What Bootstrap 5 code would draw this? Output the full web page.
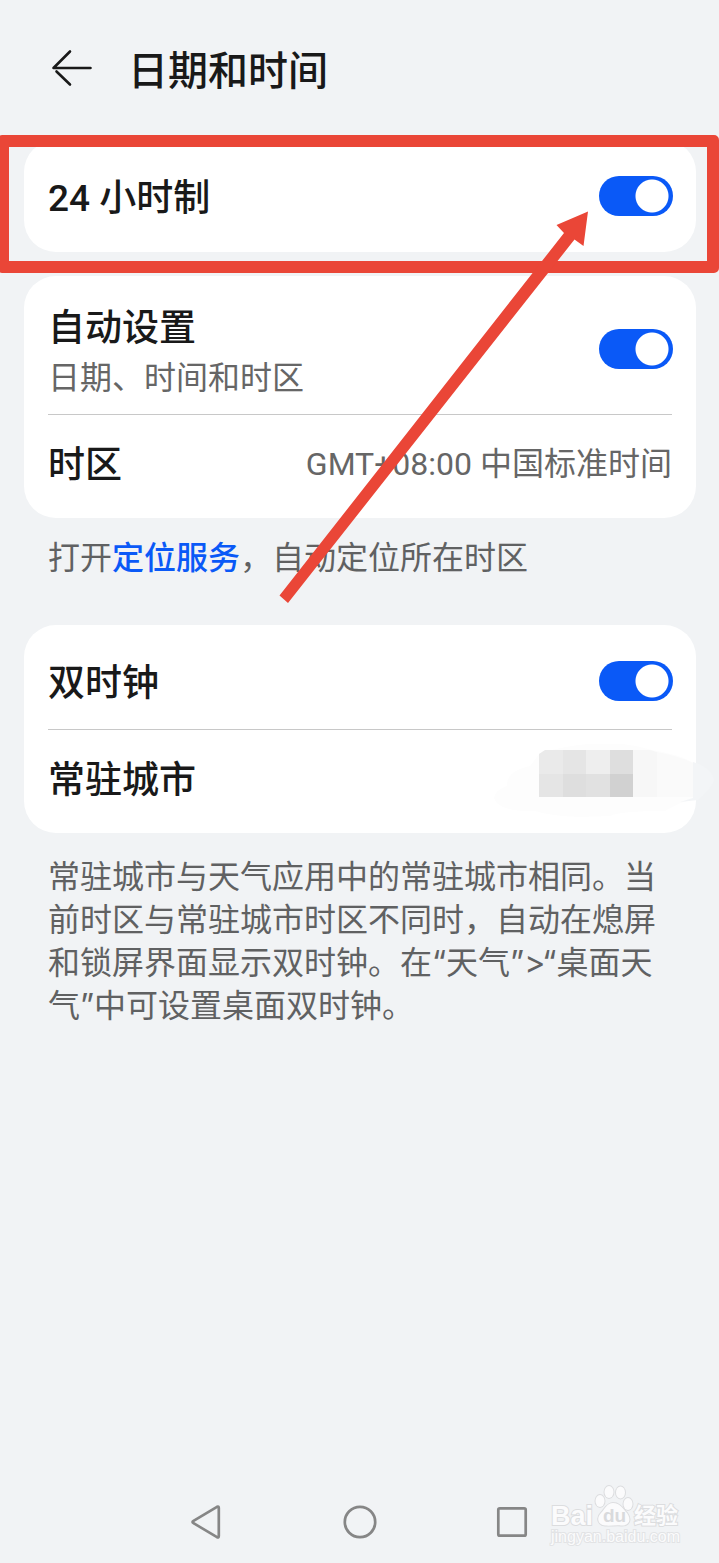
<!DOCTYPE html>
<html lang="zh-CN">
<head>
<meta charset="utf-8">
<meta name="viewport" content="width=device-width, initial-scale=1">
<title>日期和时间</title>
<link href="https://cdn.jsdelivr.net/npm/bootstrap@5.3.0/dist/css/bootstrap.min.css" rel="stylesheet">
<style>
  body { background: #f1f3f5; color: #191919; font-family: Roboto, "Noto Sans CJK SC", sans-serif; }
  .top-bar { min-height: 140px; padding: 0 48px; gap: 32px; }
  .page-title { font-size: 40px; line-height: 48px; font-weight: 500; padding-top: 4px; }
  .icon-button { width: 48px; height: 48px; }
  .settings { padding: 0 23px 0 24px; }
  .panel { background: #fff; border-radius: 32px; padding: 8px 24px; }
  .setting { min-height: 96px; }
  .setting-tall { min-height: 130px; }
  .setting + .setting { border-top: 1px solid #c8c8c8; }
  .setting-name { font-size: 37px; line-height: 48px; font-weight: 500; padding-top: 6px; }
  .setting-note { font-size: 32px; line-height: 43px; color: #666; padding-top: 4px; }
  .hint { font-family: Inter, "Noto Sans CJK SC", sans-serif; font-size: 32px; line-height: 43px; color: #606162; padding: 0 24px; margin: 18px 0 46px; }
  .hint a { color: #0a59f7; font-weight: 500; }
  .summary { margin: 22px 0; }
  .form-switch .toggle { width: 74px; height: 40px; border: 0; margin: 0 -1px 0 0; border-radius: 20px;
    background: #c8cbce radial-gradient(circle at 21px 20px, #fff 16px, transparent 17px); }
  .form-switch .toggle:checked { background: #0a59f7 radial-gradient(circle at 53px 20px, #fff 16px, transparent 17px); }
  .callout-frame { inset: -5px -23px -21px -27px; border: 12px solid #ea4637; border-radius: 5px; pointer-events: none; z-index: 2; }
  .callout-arrow { right: 106px; top: 70px; pointer-events: none; z-index: 3; }
  .mosaic { right: -42px; top: 14px; }
  .system-nav { height: 83px; gap: 105px; }
  .watermark { right: 38px; bottom: 16px; pointer-events: none; }
</style>
</head>
<body>
<div class="d-flex flex-column min-vh-100 overflow-hidden">
  <header class="top-bar d-flex align-items-center">
    <button type="button" class="icon-button btn p-0 border-0 d-flex" aria-label="返回">
      <svg width="48" height="48" viewBox="0 0 48 48" fill="none" stroke="#191919" stroke-width="2.6" stroke-linecap="round" stroke-linejoin="round"><path d="M42.500 22H5.500L22 5.500M8.500 25.500L22 38.500"/></svg>
    </button>
    <h1 class="page-title mb-0">日期和时间</h1>
  </header>

  <main class="settings">
    <div class="position-relative mb-4">
      <section class="panel">
        <div class="setting d-flex align-items-center justify-content-between">
          <label class="setting-name" for="hour24">24 小时制</label>
          <div class="form-check form-switch p-0 m-0"><input class="form-check-input toggle" type="checkbox" role="switch" id="hour24" checked></div>
        </div>
      </section>
      <div class="callout-frame position-absolute"></div>
      <svg class="callout-arrow position-absolute" width="314" height="396" viewBox="276 210 314 396" aria-hidden="true"><path fill="#ea4637" d="M279.500 595.500L564 233L556.500 225L588 211.500L583.500 246L574.500 239.500L288 603Z"/></svg>
    </div>

    <section class="panel">
      <div class="setting setting-tall d-flex align-items-center justify-content-between">
        <label for="auto"><span class="setting-name d-block">自动设置</span><span class="setting-note d-block">日期、时间和时区</span></label>
        <div class="form-check form-switch p-0 m-0"><input class="form-check-input toggle" type="checkbox" role="switch" id="auto" checked></div>
      </div>
      <div class="setting d-flex align-items-center justify-content-between">
        <span class="setting-name">时区</span>
        <span class="setting-note">GMT+08:00 中国标准时间</span>
      </div>
    </section>
    <p class="hint">打开<a class="text-decoration-none" href="#location">定位服务</a>，自动定位所在时区</p>

    <section class="panel">
      <div class="setting d-flex align-items-center justify-content-between">
        <label class="setting-name" for="dual">双时钟</label>
        <div class="form-check form-switch p-0 m-0"><input class="form-check-input toggle" type="checkbox" role="switch" id="dual" checked></div>
      </div>
      <div class="setting d-flex align-items-center position-relative">
        <span class="setting-name">常驻城市</span>
        <svg class="mosaic position-absolute" width="220" height="74" viewBox="494 744 220 74" aria-hidden="true">
          <path fill="#fdfdfd" d="M494 798Q495 790 507 786Q506 771 530 766L540 753Q605 735 652 750Q679 754 696 764V798Q680 802 665 811Q620 811 610 816Q560 819 535 811Q498 812 494 798Z"/>
          <path fill="#f3f5f7" d="M693 762Q713 768 714 781Q709 792 698 800L680 802L693 798Z"/>
          <path fill="#f7f7f7" d="M633 750H650L657 752V797H633Z"/>
          <path fill="#fafafa" d="M657 752Q679 756 693 763V797H657Z"/>
          <path fill="#eaeaea" d="M545 750H563V774H539V754Z"/>
          <path fill="#e5e5e5" d="M563 750H586V774H563ZM539 774H563V797H539Z"/>
          <path fill="#eeeeee" d="M586 750H610V774H586Z"/>
          <path fill="#dedede" d="M610 750H633V774H610ZM563 774H586V797H563Z"/>
          <path fill="#e1e1e1" d="M586 774H610V797H586Z"/>
          <path fill="#d1d1d1" d="M610 774H633V797H610Z"/>
        </svg>
      </div>
    </section>
    <p class="hint summary">常驻城市与天气应用中的常驻城市相同。当前时区与常驻城市时区不同时，自动在熄屏和锁屏界面显示双时钟。在“天气”&gt;“桌面天气”中可设置桌面双时钟。</p>
  </main>

  <nav class="system-nav mt-auto d-flex align-items-center justify-content-center position-relative" aria-label="系统导航">
    <button type="button" class="icon-button btn p-0 border-0 d-flex" aria-label="返回"><svg width="48" height="48" viewBox="0 0 48 48" fill="none" stroke="#868686" stroke-width="2.700" stroke-linejoin="round"><path d="M10.500 22.800Q8.500 24 10.500 25.200L34 39.200Q35.800 40 35.800 38V10Q35.800 8 34 8.800Z"/></svg></button>
    <button type="button" class="icon-button btn p-0 border-0 d-flex" aria-label="主屏幕"><svg width="48" height="48" viewBox="0 0 48 48" fill="none" stroke="#868686" stroke-width="2.700"><circle cx="24" cy="24" r="15.200"/></svg></button>
    <button type="button" class="icon-button btn p-0 border-0 d-flex" aria-label="最近任务"><svg width="48" height="48" viewBox="0 0 48 48" fill="none" stroke="#868686" stroke-width="2.700"><rect x="9.300" y="10.300" width="27.400" height="27.400" rx="1.500"/></svg></button>
    <svg class="watermark position-absolute" width="132" height="64" viewBox="549 1483 132 64" fill="#fbfbfc" stroke="#dcdddf" stroke-width="2" paint-order="stroke" aria-hidden="true">
      <text x="551" y="1525" font-family="Liberation Sans, sans-serif" font-size="27" font-weight="700">Bai</text>
      <ellipse cx="600" cy="1501" rx="4.500" ry="6"/><ellipse cx="609" cy="1492" rx="4.500" ry="6"/><ellipse cx="620.500" cy="1492.500" rx="4.500" ry="6"/><ellipse cx="628" cy="1504" rx="4.500" ry="6"/>
      <path d="M613 1503C607 1503 605 1509 601 1513C596 1518 598 1525 605 1525.500C610 1526 616 1525 621 1525.500C629 1526 632 1520 627 1513C623 1509 620 1503 613 1503Z"/>
      <text x="603" y="1522" font-family="Liberation Sans, sans-serif" font-size="19" font-weight="700" fill="#d9dadc" stroke="none">du</text>
      <text x="634" y="1523" font-family="Noto Sans CJK SC, sans-serif" font-size="22" font-weight="700">经验</text>
      <text x="551" y="1542" font-family="Liberation Sans, sans-serif" font-size="16" stroke="#e2e3e5" stroke-width="2">jingyan.baidu.com</text>
    </svg>
  </nav>
</div>
<script src="https://cdn.jsdelivr.net/npm/bootstrap@5.3.0/dist/js/bootstrap.bundle.min.js"></script>
</body>
</html>
